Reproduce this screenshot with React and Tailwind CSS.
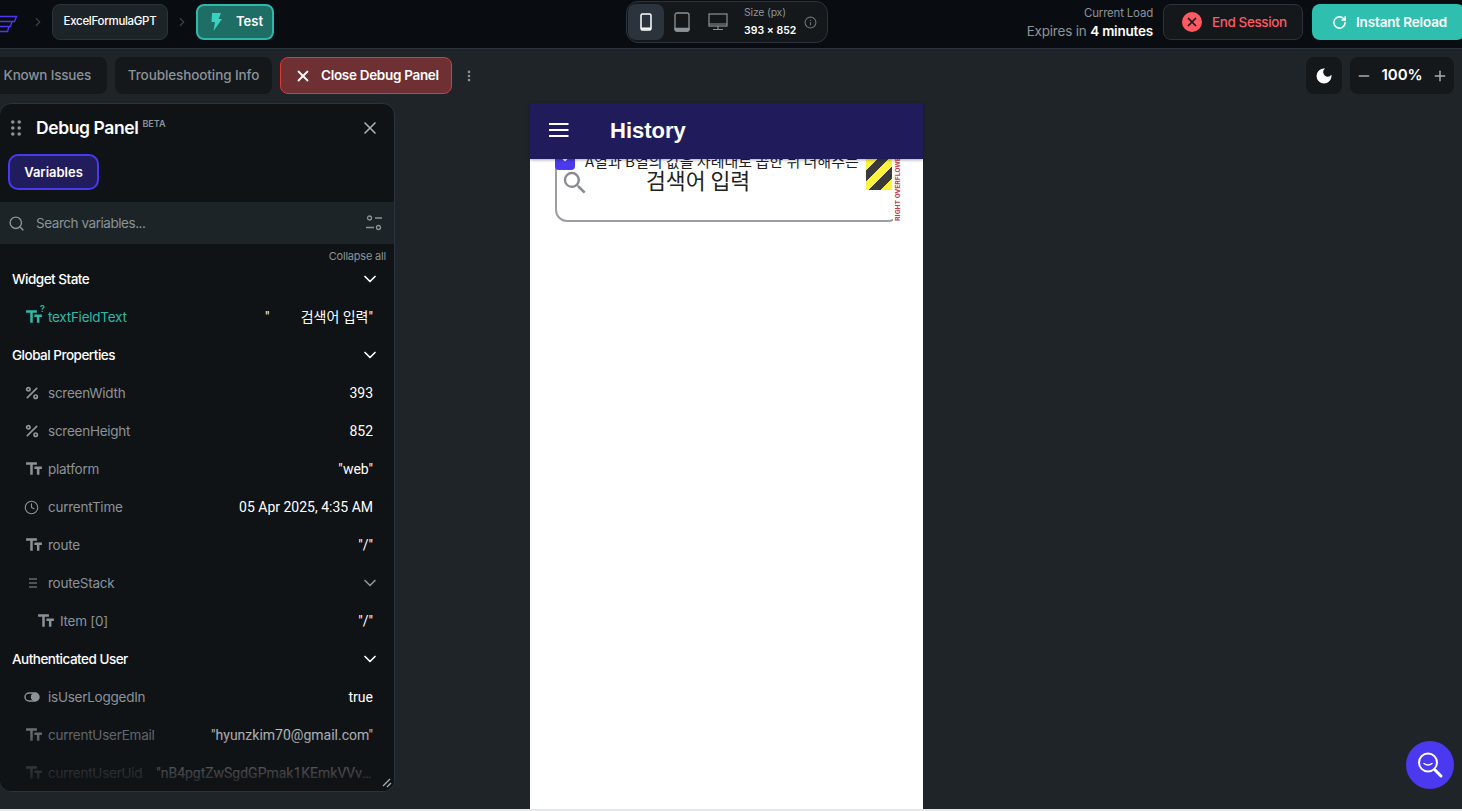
import { ChevronDown, ChevronRight, Clock, Info, Minus, MoreVertical, Plus, RotateCw, Search, X, Percent } from "lucide-react";
import { MdDarkMode, MdTextFields, MdSearch } from "react-icons/md";

const sans = "font-['Inter','Noto_Sans_CJK_KR',sans-serif]";

const LogoMark = () => (
  <svg width="18" height="32" viewBox="0 0 18 32" fill="none" stroke="#4b39ef" strokeWidth="1.4" className="shrink-0">
    <path d="M-6 10.5h22.5l-2 5H-6M-6 15.5h18l-1.5 5H-6M-3 20.5h12l-1.5 5H-1" />
  </svg>
);

const PhoneIcon = () => (
  <svg width="12" height="18" viewBox="0 0 12 18" fill="none" stroke="#fff" strokeWidth="1.5">
    <rect x="1" y="1" width="10" height="16" rx="1.5" />
    <path d="M1 15.5h10" strokeWidth="2" />
  </svg>
);

const TabletIcon = () => (
  <svg width="16" height="20" viewBox="0 0 16 20" fill="none" stroke="#8b9298" strokeWidth="1.3">
    <rect x="1" y="1" width="14" height="18" rx="2" />
    <path d="M1 16.5h14v1a1.500 1.500 0 0 1-1.500 1.500h-11A1.500 1.500 0 0 1 1 17.500z" fill="#8b9298" />
  </svg>
);

const DesktopIcon = () => (
  <svg width="20" height="18" viewBox="0 0 20 18" fill="none" stroke="#8b9298" strokeWidth="1.2">
    <rect x="1" y="1" width="18" height="12" />
    <path d="M1 11h18M10 13v3M5 16.500h10" />
  </svg>
);

const FilterIcon = () => (
  <svg width="16" height="16" viewBox="0 0 16 16" fill="none" stroke="#8b9298" strokeWidth="1.3">
    <circle cx="3.500" cy="3" r="2" />
    <path d="M9 3h7M0 12.500h8" />
    <circle cx="12.500" cy="12.500" r="2" />
  </svg>
);

const ListIcon = () => (
  <svg width="10" height="10" viewBox="0 0 10 10" stroke="#8b9298" strokeWidth="1">
    <path d="M1 1h8M1 5h8M1 9h8" />
  </svg>
);

const ToggleIcon = () => (
  <svg width="16" height="10" viewBox="0 0 16 10" fill="none" stroke="#8b9298" strokeWidth="1.400">
    <rect x="1" y="1" width="14" height="8" rx="4" />
    <circle cx="11" cy="5" r="3.500" fill="#8b9298" />
  </svg>
);

const GripIcon = () => (
  <svg width="10" height="16" viewBox="0 0 10 16" fill="#8b9298" className="shrink-0">
    <circle cx="1.800" cy="2" r="1.800" />
    <circle cx="8.200" cy="2" r="1.800" />
    <circle cx="1.800" cy="8" r="1.800" />
    <circle cx="8.200" cy="8" r="1.800" />
    <circle cx="1.800" cy="14" r="1.800" />
    <circle cx="8.200" cy="14" r="1.800" />
  </svg>
);

const iconFor = (kind) => {
  if (kind === "text") return <MdTextFields size={20} />;
  if (kind === "num") return <Percent size={16} strokeWidth={2.6} />;
  if (kind === "time") return <Clock size={15} strokeWidth={1.8} />;
  if (kind === "list") return <ListIcon />;
  return <ToggleIcon />;
};

const Heading = ({ label }) => (
  <div className="flex h-[38px] items-center justify-between pl-3 pr-[14px]">
    <span className={`text-[13.5px] font-medium tracking-[-0.5px] text-white ${sans}`}>{label}</span>
    <ChevronDown size={20} className="text-white" />
  </div>
);

const Row = ({ icon, label, value, nested }) => (
  <div className={`flex h-[38px] items-center justify-between pr-[21px] ${nested ? "pl-9" : "pl-6"}`}>
    <div className="flex shrink-0 items-center">
      <span className="flex w-6 items-center justify-start text-[#8b9298]">{iconFor(icon)}</span>
      <span className={`text-[13.5px] tracking-[-0.25px] text-[#8b9298] ${sans}`}>{label}</span>
    </div>
    <span className="truncate pl-[14px] font-['Roboto','Noto_Sans_CJK_KR',sans-serif] text-sm text-white">{value}</span>
  </div>
);

const Header = () => (
  <header className="flex h-[49px] shrink-0 items-center border-b border-[#2b343c] bg-[#090d11] pb-1">
    <div className="flex w-[626px] shrink-0 items-center">
      <LogoMark />
      <ChevronRight size={14} className="ml-[13px] text-[#3a4249]" />
      <div className={`ml-[7px] flex h-9 w-[116px] items-center justify-center rounded-lg border border-[#2b343c] bg-[#1d2428] text-[11.5px] font-medium tracking-[-0.3px] text-white ${sans}`}>ExcelFormulaGPT</div>
      <ChevronRight size={14} className="ml-[7px] text-[#3a4249]" />
      <div className={`ml-[7px] flex h-9 w-[78px] items-center gap-[14px] rounded-lg border-2 border-[#2cb9a8] bg-[#1f6e66] pl-3 text-[13px] font-semibold text-white ${sans}`}>
        <svg width="12" height="18" viewBox="0 0 12 18" fill="#39d2c0" className="shrink-0">
          <path d="M2 0h9L8.500 6H12L3.500 18 5 9H1.500z" />
        </svg>
        Test
      </div>
    </div>
    <div className="flex h-[42px] w-[202px] shrink-0 items-center rounded-xl border border-[#2b343c] bg-[#14181b] pl-[1px]">
      <div className="flex h-9 w-9 items-center justify-center rounded-lg bg-[#2b343c]"><PhoneIcon /></div>
      <div className="flex h-9 w-[36px] items-center justify-center"><TabletIcon /></div>
      <div className="flex h-9 w-[36px] items-center justify-center"><DesktopIcon /></div>
      <div className={`ml-[8px] flex flex-col text-[10.5px] leading-[18px] ${sans}`}>
        <span className="tracking-[-0.2px] text-[#8b9298]">Size (px)</span>
        <span className="font-semibold text-white">393 × 852</span>
      </div>
      <Info size={13} className="ml-[8px] text-[#6b7278]" />
    </div>
    <div className="flex min-w-0 flex-1 items-center justify-end overflow-hidden">
      <div className={`flex shrink-0 flex-col items-end text-right ${sans}`}>
        <span className="text-[11.5px] leading-[18px] tracking-[-0.2px] text-[#8b9298]">Current Load</span>
        <span className="text-[13.5px] leading-[18px] tracking-[-0.2px] text-[#8b9298]">Expires in <b className="font-semibold text-white">4 minutes</b></span>
      </div>
      <div className={`ml-[10px] flex h-9 w-[140px] shrink-0 items-center rounded-lg border border-[#2b343c] bg-[#14181b] pl-[18px] text-[13.5px] font-medium tracking-[-0.4px] text-[#ff5963] ${sans}`}>
        <span className="mr-[10px] flex h-5 w-5 items-center justify-center rounded-full bg-[#ff5963]"><X size={14} strokeWidth={3} className="text-[#14181b]" /></span>
        End Session
      </div>
      <div className={`-mr-[3px] ml-[9px] flex h-9 w-[153px] shrink-0 items-center rounded-lg bg-[#2fbfae] pl-[20px] text-[13.5px] font-semibold tracking-[-0.15px] text-white ${sans}`}>
        <RotateCw size={15} strokeWidth={2.5} className="mr-[9px]" />
        Instant Reload
      </div>
    </div>
  </header>
);

const Toolbar = () => (
  <div className={`flex h-[54px] shrink-0 items-center justify-between pb-[1px] pr-2 ${sans}`}>
    <div className="flex items-center">
      <div className="-ml-[8px] flex h-[37px] w-[115px] items-center justify-end rounded-lg bg-[#14181b] pr-[16px] text-[13.5px] font-medium tracking-[-0.2px] text-[#8b9298]">Known Issues</div>
      <div className="ml-2 flex h-[37px] w-[157px] items-center justify-center rounded-lg bg-[#14181b] text-[13.5px] font-medium tracking-[-0.1px] text-[#8b9298]">Troubleshooting Info</div>
      <div className="ml-2 flex h-[37px] w-[172px] items-center rounded-lg border border-[#d93a3a] bg-[#6e3032] pl-[13px] text-[13.5px] font-semibold tracking-[-0.3px] text-white">
        <X size={18} strokeWidth={2.4} className="mr-[9px]" />
        Close Debug Panel
      </div>
      <MoreVertical size={14} strokeWidth={2.5} className="ml-[10px] text-[#8b9298]" />
    </div>
    <div className="flex items-center gap-2">
      <div className="flex h-[37px] w-9 items-center justify-center rounded-lg bg-[#14181b]"><MdDarkMode size={20} className="text-white" /></div>
      <div className="flex h-[37px] w-[104px] items-center justify-between rounded-lg bg-[#14181b] px-[6px] text-[15px] font-semibold text-white">
        <Minus size={16} strokeWidth={2.2} className="text-[#a8adb2]" />
        100%
        <Plus size={16} strokeWidth={2.2} className="text-[#a8adb2]" />
      </div>
    </div>
  </div>
);

const DebugPanel = () => (
  <aside className="relative -ml-px flex h-[689px] w-[396px] shrink-0 flex-col overflow-hidden rounded-xl border border-[#2b343c] bg-[#101316]">
    <div className="flex h-[50px] shrink-0 items-center justify-between pb-[2px] pl-[11px] pr-[14px]">
      <div className={`flex items-center ${sans}`}>
        <GripIcon />
        <span className="ml-[15px] text-[17.500px] font-semibold tracking-[-0.4px] text-white">Debug Panel</span>
        <span className="mb-2 ml-1 text-[9px] font-semibold text-[#8b9298]">BETA</span>
      </div>
      <X size={20} className="text-[#a8adb2]" />
    </div>
    <div className="shrink-0 pl-2">
      <div className={`flex h-9 w-[91px] items-center justify-center rounded-[10px] border-2 border-[#4b39ef] bg-[#211d5c] pt-[1px] text-[13px] font-semibold text-white ${sans}`}>Variables</div>
    </div>
    <div className="mt-3 flex h-[42px] shrink-0 items-center justify-between bg-[#1c2428] pl-2 pr-3">
      <div className="flex items-center">
        <Search size={17} className="text-[#8b9298]" />
        <span className={`ml-[11px] text-[13.5px] tracking-[-0.45px] text-[#8b9298] ${sans}`}>Search variables...</span>
      </div>
      <FilterIcon />
    </div>
    <div className={`mt-[4px] -mb-[4px] h-4 shrink-0 pr-2 text-right text-[11px] leading-4 tracking-[-0.2px] text-[#8b9298] ${sans}`}>Collapse all</div>
    <div className="flex flex-col">
      <Heading label="Widget State" />
      <div className="flex h-[38px] items-center justify-between pr-[21px] pl-6">
        <div className="flex items-center">
          <span className="relative flex w-6 items-center text-[#2cb9a8]">
            <MdTextFields size={20} />
            <span className={`absolute -top-[5px] left-[16px] text-[9px] font-semibold ${sans}`}>?</span>
          </span>
          <span className={`text-[13.5px] tracking-[-0.25px] text-[#2cb9a8] ${sans}`}>textFieldText</span>
        </div>
        <span className="whitespace-pre font-['Roboto','Noto_Sans_CJK_KR',sans-serif] text-sm text-white">{'"         검색어 입력"'}</span>
      </div>
      <Heading label="Global Properties" />
      <Row icon="num" label="screenWidth" value="393" />
      <Row icon="num" label="screenHeight" value="852" />
      <Row icon="text" label="platform" value='"web"' />
      <Row icon="time" label="currentTime" value="05 Apr 2025, 4:35 AM" />
      <Row icon="text" label="route" value='"/"' />
      <div className="flex h-[38px] items-center justify-between pl-6 pr-[14px]">
        <div className="flex items-center">
          <span className="flex w-6 pl-[4px]"><ListIcon /></span>
          <span className={`text-[13.5px] tracking-[-0.25px] text-[#8b9298] ${sans}`}>routeStack</span>
        </div>
        <ChevronDown size={20} className="text-[#8b9298]" />
      </div>
      <Row nested icon="text" label="Item [0]" value='"/"' />
      <Heading label="Authenticated User" />
      <Row icon="toggle" label="isUserLoggedIn" value="true" />
      <Row icon="text" label="currentUserEmail" value='"hyunzkim70@gmail.com"' />
      <Row icon="text" label="currentUserUid" value='"nB4pgtZwSgdGPmak1KEmkVVvXy2"' />
    </div>
    <div className="pointer-events-none absolute inset-x-0 bottom-0 h-[86px] bg-gradient-to-b from-[#101316]/0 to-[#101316]" />
    <svg width="10" height="10" viewBox="0 0 10 10" stroke="#a8adb2" strokeWidth="1.300" className="absolute bottom-[3px] right-[2px]">
      <path d="M1 8l7-7M5 9l4-4" />
    </svg>
  </aside>
);

const Preview = () => (
  <section className="ml-[135px] flex h-[706px] w-[393px] shrink-0 flex-col bg-white">
    <div className="z-10 flex h-14 shrink-0 items-center bg-[#201c5c] pb-[2px] pl-[19px] shadow-[0_1px_3px_rgba(0,0,0,0.35)]">
      <svg width="20" height="14" viewBox="0 0 20 14" stroke="#fff" strokeWidth="2">
        <path d="M0 1h19.500M0 7h19.500M0 13h19.500" />
      </svg>
      <h1 className="ml-[41px] font-['Liberation_Sans',sans-serif] text-[22px] font-bold text-white">History</h1>
    </div>
    <div className="relative flex-1 overflow-hidden">
      <div className="absolute left-[25px] top-[-20px] h-[83px] w-[338px] overflow-hidden">
        <div className="h-full w-[345px] rounded-xl border-2 border-[#9a9ea3]" />
      </div>
      <div className="absolute left-[25px] top-[-9px] flex h-5 w-5 items-end justify-center rounded-sm bg-[#4b39ef] pb-[5px]">
        <ChevronDown size={12} strokeWidth={3} className="text-white" />
      </div>
      <span className="absolute left-[55px] top-[-8px] whitespace-nowrap font-['Noto_Sans_CJK_KR',sans-serif] text-[15px] leading-5 text-[#1f1f1f]">A열과 B열의 값을 차례대로 곱한 뒤 더해주는</span>
      <MdSearch size={30} className="absolute left-[30px] top-[9px] text-[#8a8d91]" />
      <span className="absolute left-[116px] top-[5px] whitespace-nowrap font-['Noto_Sans_CJK_KR',sans-serif] text-[21.600px] leading-8 text-[#222]">검색어 입력</span>
      <div className="absolute left-[336px] top-0 h-[31px] w-[26px] bg-[repeating-linear-gradient(135deg,#fdf33a_0,#fdf33a_8px,#3a3a3a_8px,#3a3a3a_16px)]" />
      <span className="absolute left-[363px] top-[-4px] h-[66px] rotate-180 whitespace-nowrap text-right font-['Roboto',sans-serif] text-[7.200px] font-bold leading-[9px] text-[#c0404a] [writing-mode:vertical-rl]">RIGHT OVERFLOWED</span>
    </div>
  </section>
);

export default function App() {
  return (
    <div className="relative flex h-[811px] w-[1462px] flex-col overflow-hidden bg-[#1f2428]">
      <Header />
      <Toolbar />
      <div className="flex min-h-0 flex-1 items-start">
        <DebugPanel />
        <Preview />
      </div>
      <div className="h-[2px] shrink-0 bg-[#e4e6e8]" />
      <div className="absolute bottom-[22px] right-[8px] flex h-12 w-12 items-center justify-center rounded-full bg-[#4b39ef]">
        <svg width="30" height="30" viewBox="0 0 30 30" fill="none" stroke="#fff" strokeWidth="2" strokeLinecap="round">
          <circle cx="13" cy="12.500" r="9" />
          <path d="M9 13.500q4 3 8 0" strokeWidth="1.500" />
          <path d="M20 20l6 6" strokeWidth="3" />
        </svg>
      </div>
    </div>
  );
}
